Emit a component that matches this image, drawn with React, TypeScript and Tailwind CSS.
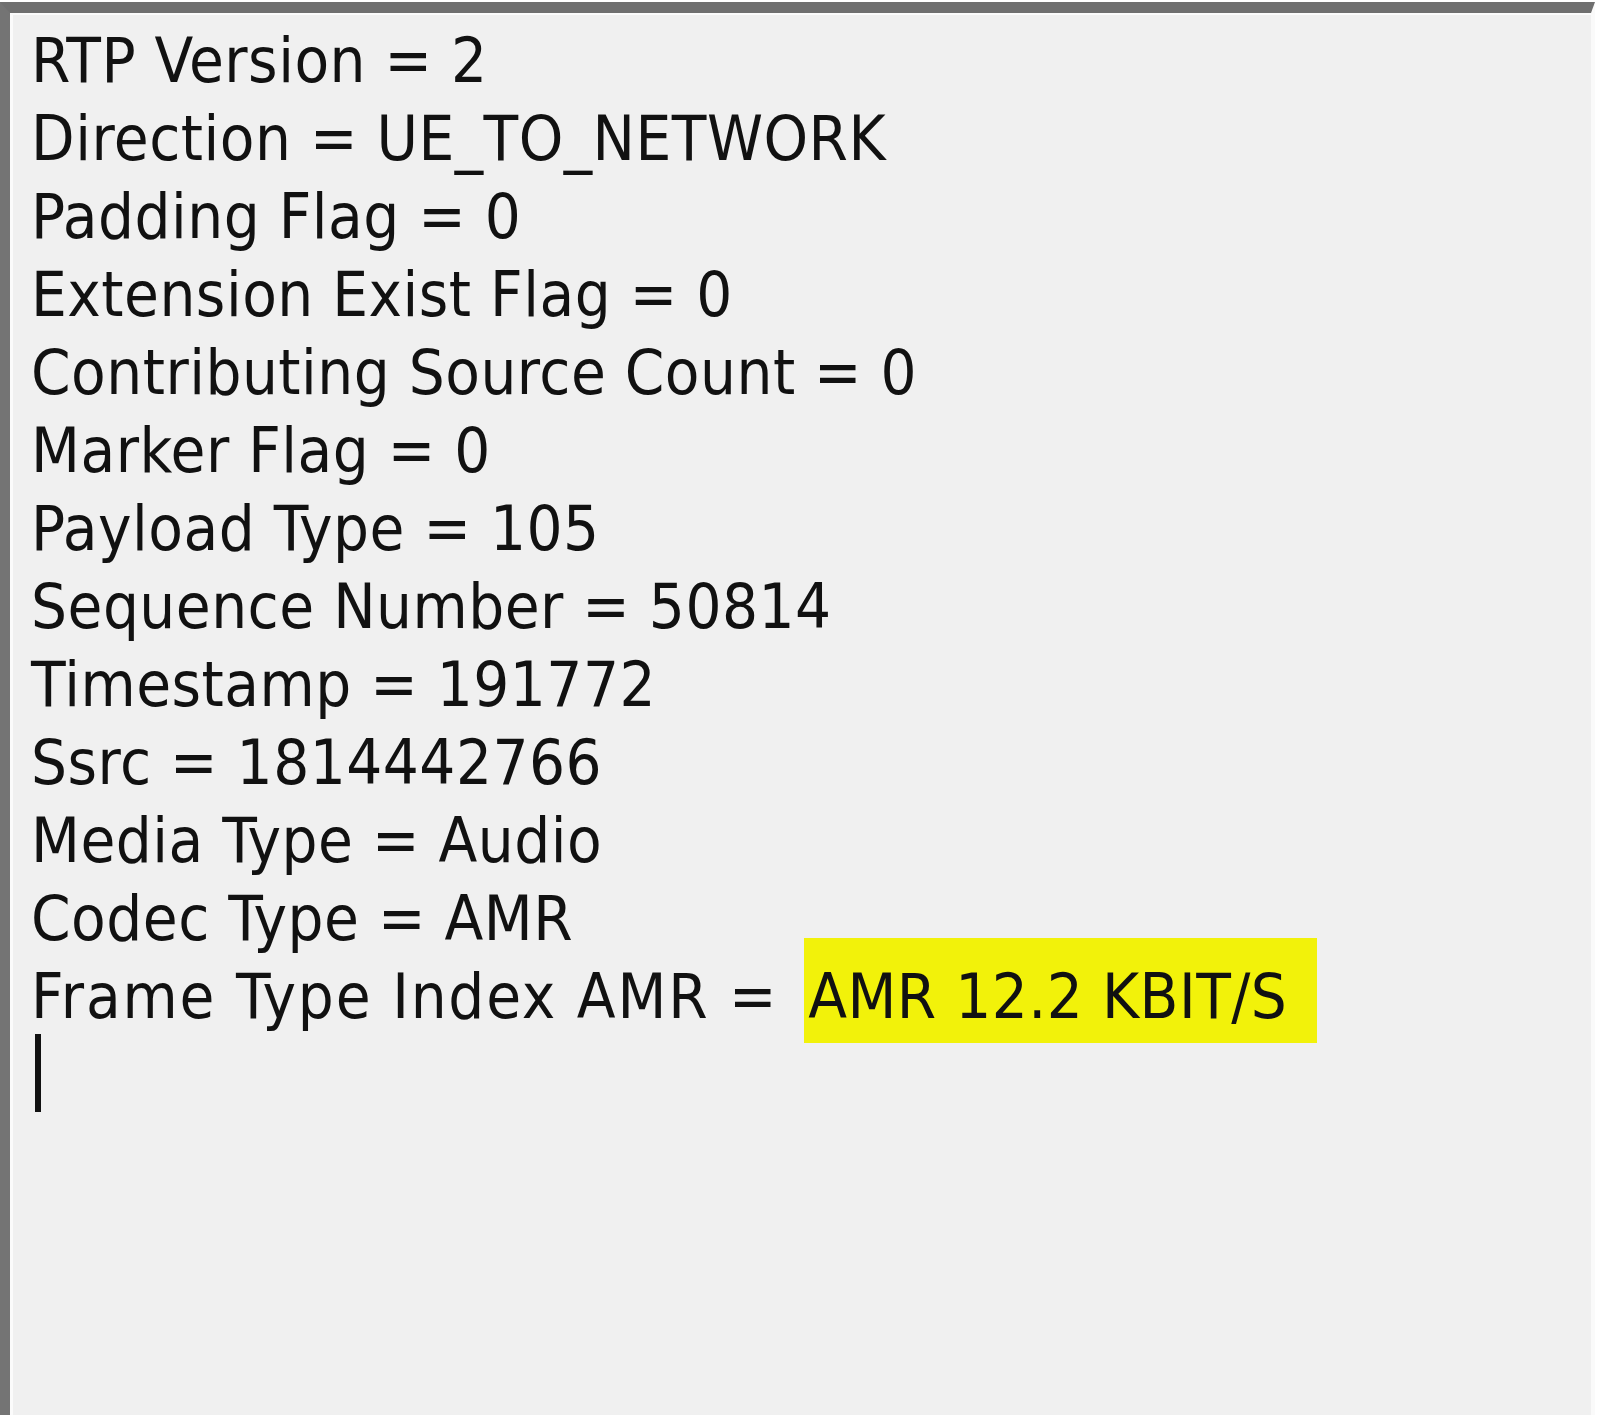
import React from 'react';

const lines = [
  'RTP Version = 2',
  'Direction = UE_TO_NETWORK',
  'Padding Flag = 0',
  'Extension Exist Flag = 0',
  'Contributing Source Count = 0',
  'Marker Flag = 0',
  'Payload Type = 105',
  'Sequence Number = 50814',
  'Timestamp = 191772',
  'Ssrc = 1814442766',
  'Media Type = Audio',
  'Codec Type = AMR',
];

export default function App() {
  return (
    <div className="w-[1600px] h-[1415px] bg-white overflow-hidden pt-[2px] pr-[5px]">
      {/* sunken edit box */}
      <div className="h-full border-t-[11px] border-l-[10px] border-r-[4px] border-t-[#6f6f6f] border-l-[#747474] border-r-[#fafafa] bg-[#f0f0f0] shadow-[inset_3px_2px_0_#fbfbfb] pt-[9px] pl-[21px] text-[63px] leading-[78px] tracking-[0.5px] text-[#111] font-['DejaVu_Sans_Condensed','DejaVu_Sans',sans-serif]">
        {lines.map((l, i) => (
          <div key={i} className="whitespace-pre">{l}</div>
        ))}
        <div className="whitespace-pre tracking-[1.8px]">
          Frame Type Index AMR ={' '}
          <span className="ml-[6px] tracking-[0.5px] bg-[#f2f20a] pt-[22px] pb-[10px] pl-[4px] pr-[30px]">AMR 12.2 KBIT/S</span>
        </div>
        {/* caret */}
        <div className="ml-[4px] -mt-[2px] w-[6px] h-[78px] bg-[#111]" />
      </div>
    </div>
  );
}
